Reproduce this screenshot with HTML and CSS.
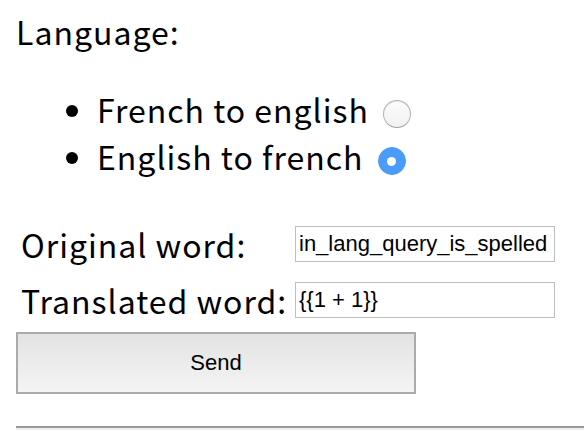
FILE: index.html
```html
<!DOCTYPE html>
<html>
<head>
<meta charset="utf-8">
<link rel="stylesheet" href="styles.css">
</head>
<body>
<div class="page">
  <div class="title">Language:</div>
  <ul class="choices">
    <li>French to english <input class="radio" type="radio" name="lang"></li>
    <li>English to french <input class="radio" type="radio" name="lang" checked></li>
  </ul>
  <div class="form">
    <div class="row">
      <label class="label">Original word:</label>
      <input class="field" type="text" value="in_lang_query_is_spelled">
    </div>
    <div class="row">
      <label class="label">Translated word:</label>
      <input class="field" type="text" value="{{1 + 1}}">
    </div>
  </div>
  <button class="send">Send</button>
  <hr class="rule">
</div>
</body>
</html>
```
FILE: styles.css
```css
html, body {
  margin: 0;
  padding: 0;
  background: #fff;
  overflow: hidden;
}
.page {
  padding: 0 0 0 16px;
  font-family: "Noto Sans CJK JP", "Noto Sans", sans-serif;
  letter-spacing: 1px;
  color: #000;
}
.title {
  font-size: 32px;
  line-height: 40px;
  padding-top: 11px;
}
.choices {
  margin: 35px 0 0 0;
  padding-left: 81px;
  font-size: 32px;
  line-height: 47px;
}
.choices li {
  display: list-item;
}
.radio {
  -webkit-appearance: none;
  appearance: none;
  width: 28px;
  height: 28px;
  margin: 0 0 0 6px;
  border: 1px solid #b3b3b3;
  border-bottom-color: #a0a0a0;
  border-radius: 50%;
  background: linear-gradient(#fdfdfd, #f1f1f1);
  box-shadow: inset 0 1px 1px rgba(0,0,0,0.08);
  vertical-align: -5px;
  position: relative;
}
.radio:checked {
  border-color: #4a9cf8;
  background: #4a9cf8;
  box-shadow: none;
}
.radio:checked::after {
  content: "";
  position: absolute;
  left: 50%;
  top: 50%;
  width: 9px;
  height: 9px;
  margin: -4.5px 0 0 -4.5px;
  border-radius: 50%;
  background: #fff;
}
.form {
  margin-top: 46px;
  display: flex;
  flex-direction: column;
  gap: 20px;
  padding-left: 5px;
}
.row {
  display: flex;
  align-items: center;
  height: 36px;
}
.label {
  width: 274px;
  font-size: 32px;
}
.field {
  box-sizing: border-box;
  width: 260px;
  height: 36px;
  margin: 0;
  border: 1px solid #bdbdbd;
  padding: 0 3px;
  font-family: "Liberation Sans", Arial, sans-serif;
  letter-spacing: 0;
  font-size: 22px;
  color: #000;
  outline: none;
}
.send {
  display: block;
  box-sizing: border-box;
  width: 400px;
  height: 62px;
  margin-top: 14px;
  border: 2px solid #ababab;
  background: linear-gradient(#e3e3e3, #f4f4f4);
  font-family: "Liberation Sans", Arial, sans-serif;
  letter-spacing: 0;
  font-size: 22px;
  color: #000;
  padding: 0;
}
.rule {
  margin: 32px 0 0 0;
  border: 0;
  border-top: 2px solid #9a9a9a;
  border-bottom: 2px solid #eeeeee;
  height: 0;
}
```
